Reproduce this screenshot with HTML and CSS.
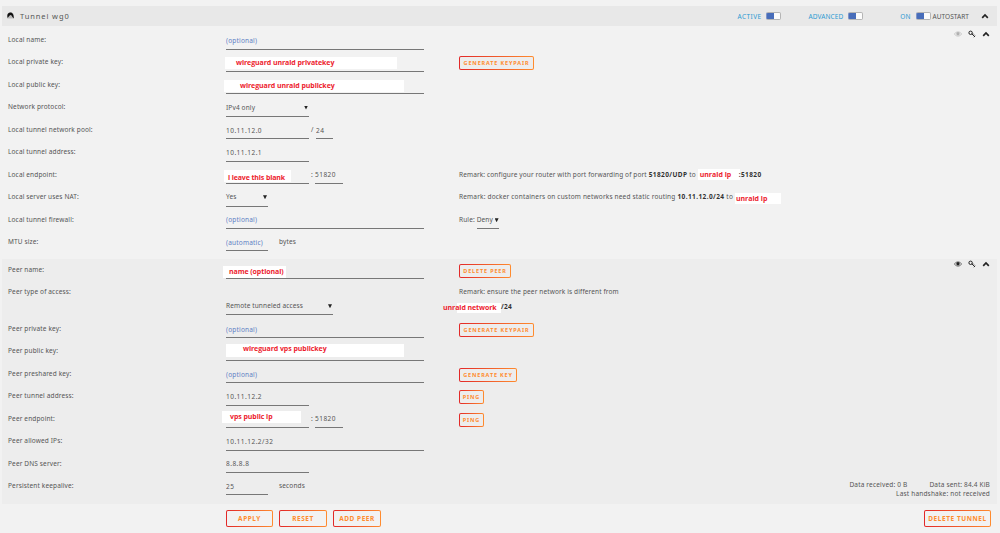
FILE: index.html
```html
<!DOCTYPE html>

<html lang="en">

<head>

    <title>Tunnel wg0</title>

    <meta charset="UTF-8">
    <meta name="viewport" content="width=device-width, initial-scale=1.0">

    <link rel="stylesheet" href="styles.css">

</head>

<body>

    <!-- ICONS -->
    <svg class="sprite">
        <symbol id="chevron" viewBox="0 0 8 6">
            <path d="M1.2 4.8 L4 2 L6.8 4.8" fill="none" stroke="currentColor" stroke-width="1.7"/>
        </symbol>
        <symbol id="eye" viewBox="0 0 8 6">
            <path d="M0.3 3 Q4 -1.4 7.7 3 Q4 7.4 0.3 3 Z" fill="none" stroke="currentColor" stroke-width="0.6"/>
            <circle cx="4" cy="2.8" r="1.7" fill="currentColor"/>
        </symbol>
        <symbol id="key" viewBox="0 0 8 8">
            <circle cx="2.6" cy="2.8" r="1.7" fill="none" stroke="currentColor" stroke-width="1"/>
            <path d="M3.8 3.9 L7 6.8 M5.1 3.6 L5.9 4.4 M5.8 7.2 L7.2 5.8" fill="none" stroke="currentColor" stroke-width="1"/>
        </symbol>
    </svg>

    <!-- TUNNEL HEADER -->
    <div class="title">
        <svg class="tunnel-icon" viewBox="0 0 7 7">
            <path d="M0.3 6.5 L0.3 2 Q3.5 -1.3 6.7 2 L6.7 6.5 Z" fill="#bbb"/>
            <path d="M0.3 4 Q0.4 0.5 3.5 0.5 Q6.6 0.5 6.9 6.4 L5.4 5 L4.6 3.6 L3.2 3 L2 4.2 L0.6 6 Z" fill="#111"/>
        </svg>
        <span class="title-text">Tunnel wg0</span>
        <span class="switch-label active">ACTIVE</span>
        <span class="switch"></span>
        <span class="switch-label advanced">ADVANCED</span>
        <span class="switch"></span>
        <span class="switch-label on">ON</span>
        <span class="switch"></span>
        <span class="autostart">AUTOSTART</span>
        <svg class="icon"><use href="#chevron"/></svg>
    </div>

    <!-- LOCAL SETTINGS -->
    <div class="section">
        <div class="row">
            <label>Local name:</label>
            <div class="field"><input class="wide" placeholder="(optional)"></div>
            <div></div>
            <div class="tools">
                <svg class="icon faded"><use href="#eye"/></svg>
                <svg class="icon key"><use href="#key"/></svg>
                <svg class="icon"><use href="#chevron"/></svg>
            </div>
        </div>
        <div class="row">
            <label>Local private key:</label>
            <div class="field"><input class="wide"><span class="note private-key">wireguard unraid privatekey</span></div>
            <div class="remark"><button class="keypair">GENERATE KEYPAIR</button></div>
        </div>
        <div class="row">
            <label>Local public key:</label>
            <div class="field"><input class="wide"><span class="note public-key">wireguard unraid publickey</span></div>
        </div>
        <div class="row">
            <label>Network protocol:</label>
            <div class="field"><span class="select medium">IPv4 only</span></div>
        </div>
        <div class="row">
            <label>Local tunnel network pool:</label>
            <div class="field"><input class="medium" value="10.11.12.0"><span class="slash">/</span><input class="mask" value="24"></div>
        </div>
        <div class="row">
            <label>Local tunnel address:</label>
            <div class="field"><input class="medium" value="10.11.12.1"></div>
        </div>
        <div class="row">
            <label>Local endpoint:</label>
            <div class="field"><input class="medium"><span class="colon">:</span><input class="port" value="51820"><span class="note endpoint">i leave this blank</span></div>
            <div class="remark">Remark: configure your router with port forwarding of port <b>51820/UDP</b> to <span class="cover router-ip">unraid ip</span><b>:51820</b></div>
        </div>
        <div class="row">
            <label>Local server uses NAT:</label>
            <div class="field"><span class="select small">Yes</span></div>
            <div class="remark docker">Remark: docker containers on custom networks need static routing <b>10.11.12.0/24</b> to <span class="cover docker-ip">unraid ip</span></div>
        </div>
        <div class="row">
            <label>Local tunnel firewall:</label>
            <div class="field"><input class="wide" placeholder="(optional)"></div>
            <div class="remark">Rule: <span class="select rule">Deny</span></div>
        </div>
        <div class="row">
            <label>MTU size:</label>
            <div class="field"><input class="small" placeholder="(automatic)"><span class="unit">bytes</span></div>
        </div>
    </div>

    <!-- PEER SETTINGS -->
    <div class="section peer">
        <div class="row">
            <label>Peer name:</label>
            <div class="field"><input class="wide"><span class="note peer-name">name (optional)</span></div>
            <div class="remark"><button class="delete-peer">DELETE PEER</button></div>
            <div class="tools">
                <svg class="icon"><use href="#eye"/></svg>
                <svg class="icon key"><use href="#key"/></svg>
                <svg class="icon"><use href="#chevron"/></svg>
            </div>
        </div>
        <div class="row">
            <label>Peer type of access:</label>
            <div></div>
            <div class="remark">Remark: ensure the peer network is different from</div>
        </div>
        <div class="row access">
            <div></div>
            <div class="field"><span class="select access-type">Remote tunneled access</span></div>
            <div class="network"><span class="cover">unraid network</span><b>/24</b></div>
        </div>
        <div class="row">
            <label>Peer private key:</label>
            <div class="field"><input class="wide" placeholder="(optional)"></div>
            <div class="remark"><button class="keypair">GENERATE KEYPAIR</button></div>
        </div>
        <div class="row">
            <label>Peer public key:</label>
            <div class="field"><input class="wide"><span class="note peer-key">wireguard vps publickey</span></div>
        </div>
        <div class="row">
            <label>Peer preshared key:</label>
            <div class="field"><input class="wide" placeholder="(optional)"></div>
            <div class="remark"><button class="gen-key">GENERATE KEY</button></div>
        </div>
        <div class="row">
            <label>Peer tunnel address:</label>
            <div class="field"><input class="medium" value="10.11.12.2"></div>
            <div class="remark"><button class="ping">PING</button></div>
        </div>
        <div class="row">
            <label>Peer endpoint:</label>
            <div class="field"><input class="medium"><span class="colon">:</span><input class="port" value="51820"><span class="note vps-ip">vps public ip</span></div>
            <div class="remark"><button class="ping">PING</button></div>
        </div>
        <div class="row">
            <label>Peer allowed IPs:</label>
            <div class="field"><input class="wide" value="10.11.12.2/32"></div>
        </div>
        <div class="row">
            <label>Peer DNS server:</label>
            <div class="field"><input class="medium" value="8.8.8.8"></div>
        </div>
        <div class="row">
            <label>Persistent keepalive:</label>
            <div class="field"><input class="small" value="25"><span class="unit">seconds</span></div>
            <div class="stats">
                <div><span>Data received: 0 B</span><span class="sent">Data sent: 84.4 KiB</span></div>
                <div>Last handshake: not received</div>
            </div>
        </div>
    </div>

    <!-- BUTTONS -->
    <div class="footer">
        <button class="apply">APPLY</button>
        <button class="reset">RESET</button>
        <button class="add-peer">ADD PEER</button>
        <button class="delete-tunnel">DELETE TUNNEL</button>
    </div>

</body>

</html>
```
FILE: styles.css
```css
* {
    box-sizing: border-box;
    padding: 0;
    margin: 0;
}
body {
    background-color: #f2f2f2;
    color: #555;
    font-family: "Noto Sans", sans-serif;
    font-size: 6.5px;
    letter-spacing: 0.14px;
    padding: 6px 3px 0 2px;
    height: 533px;
    overflow: hidden;
}
b {
    color: #333;
    letter-spacing: 0.42px;
}
.sprite {
    display: none;
}
.icon {
    width: 8px;
    height: 6px;
    color: #222;
    flex: none;
}
.icon.key {
    width: 8px;
    height: 8px;
}
.icon.faded {
    color: #b0b0b0;
}

/* header bar */
.title {
    display: flex;
    align-items: center;
    height: 20px;
    padding: 0 8px 0 5px;
    background-color: #e8e8e8;
}
.tunnel-icon {
    width: 7px;
    height: 7px;
    margin-bottom: 2px;
}
.title-text {
    font-size: 7.5px;
    letter-spacing: 0.9px;
    margin: 0 auto 0 6px;
}
.switch-label {
    color: #2d9bd3;
    margin-right: 5px;
    letter-spacing: 0.1px;
}
.switch-label.active {
    letter-spacing: 0.4px;
}
.switch {
    width: 15px;
    height: 8px;
    border: 1px solid #b5b5b5;
    border-left-color: #7d94c8;
    border-radius: 2px;
    background: linear-gradient(to right, #486dba 52%, #fcfcfc 52%);
}
.advanced {
    margin-left: 27px;
}
.on {
    margin-left: 37px;
}
.autostart {
    margin: 0 12px 0 2px;
    letter-spacing: 0.05px;
}

/* form rows */
.section {
    padding-top: 3px;
    height: 232.5px;
}
.peer {
    padding-top: 0;
    height: 245px;
    background-color: #ededed;
}
.row {
    display: grid;
    grid-template-columns: 218px 233px 1fr auto;
    height: 22.45px;
    padding: 0 7px 0 6px;
    line-height: 22.9px;
    white-space: nowrap;
}
.field {
    display: flex;
    position: relative;
    height: 21px;
}
input, .select {
    display: block;
    height: 20.5px;
    border: none;
    border-bottom: 1px solid #777;
    border-radius: 0;
    background: none;
    color: #555;
    font: inherit;
    letter-spacing: 0.48px;
    padding-top: 3px;
    line-height: 18px;
    outline: none;
}
::placeholder {
    color: #5f80c4;
    letter-spacing: 0.2px;
    opacity: 1;
}
.wide {
    width: 198px;
}
.medium {
    width: 83px;
}
.small {
    width: 42px;
}
.mask {
    width: 17px;
}
.port {
    width: 28px;
}
.slash, .colon {
    padding-left: 2px;
    width: 7px;
}
.colon {
    width: 6px;
}
.unit {
    padding-left: 11px;
}
.select {
    display: flex;
    justify-content: space-between;
    align-items: center;
    letter-spacing: 0.15px;
    padding-right: 1px;
}
.select::after {
    content: "";
    width: 4px;
    height: 4px;
    background-color: #222;
    clip-path: polygon(0 0, 100% 0, 50% 100%);
}
.access {
    height: 14.55px;
}
.access .field {
    margin-top: -8.5px;
}
.access-type {
    width: 107px;
    letter-spacing: 0.12px;
}
.remark {
    letter-spacing: 0.13px;
}
.docker {
    letter-spacing: 0.18px;
}
.rule {
    display: inline-flex;
    width: 22px;
    height: 18px;
    line-height: 16px;
    padding: 2px 0 0;
    vertical-align: middle;
}

/* red notes on white boxes, laid over the inputs */
.note, .cover {
    background-color: #fff;
    color: #ed1c2e;
    font-family: "Open Sans", sans-serif;
    font-weight: bold;
    font-size: 7px;
    letter-spacing: -0.07px;
}
.note {
    position: absolute;
    height: 12px;
    line-height: 12px;
}
.private-key {
    left: -1px;
    top: 6px;
    width: 172px;
    padding-left: 11px;
}
.public-key {
    left: -2px;
    top: 6px;
    width: 180px;
    padding-left: 16px;
}
.endpoint {
    left: -2px;
    top: 6px;
    width: 67px;
    padding-left: 4px;
    line-height: 15px;
    letter-spacing: -0.12px;
}
.peer-name {
    left: -3px;
    top: 7px;
    width: 63px;
    padding-left: 6px;
}
.peer-key {
    left: 0;
    top: 4px;
    width: 178px;
    height: 13px;
    line-height: 10px;
    padding-left: 17px;
}
.vps-ip {
    left: -4px;
    top: 3px;
    width: 79px;
    padding-left: 8px;
}
.cover {
    display: inline-block;
    height: 11px;
    line-height: 11px;
    vertical-align: middle;
}
.router-ip {
    width: 42px;
    padding-left: 2px;
    letter-spacing: 0;
}
.router-ip + b {
    margin-left: -1px;
}
.docker-ip {
    width: 46px;
    padding-left: 1px;
    letter-spacing: 0;
    margin-top: 2px;
}
.network {
    margin: -7px 0 0 -16px;
}
.network b {
    letter-spacing: 0.3px;
}
.network .cover {
    width: 58px;
    height: 10px;
    line-height: 10px;
    background: linear-gradient(to right, transparent 14px, #fff 14px);
}
.tools {
    display: flex;
    align-items: center;
    gap: 6px;
    height: 10px;
    padding-right: 0.5px;
}

/* buttons */
button {
    display: block;
    height: 14px;
    border: 1px solid transparent;
    border-radius: 2px;
    background: linear-gradient(#ededed, #ededed) padding-box, linear-gradient(to right, #e22828, #ff8c2f) border-box;
    color: #ff8c2f;
    font-family: "Noto Sans", sans-serif;
    font-weight: bold;
    font-size: 5.5px;
    letter-spacing: 0.85px;
    line-height: 12px;
    text-align: center;
}
.remark button {
    margin-top: 5px;
}
.keypair {
    width: 75px;
}
.delete-peer {
    width: 52px;
}
.gen-key {
    width: 58px;
}
.ping {
    width: 25px;
}
.stats {
    grid-column: 3 / 5;
    line-height: 9.5px;
    padding-top: 5px;
    text-align: right;
    letter-spacing: 0.18px;
}
.sent {
    margin-left: 22px;
}
.footer {
    display: flex;
    gap: 6px;
    padding: 6px 6px 0 224px;
}
.footer button {
    height: 17px;
    font-size: 6.5px;
    letter-spacing: 0.55px;
    line-height: 15px;
    background: linear-gradient(#f2f2f2, #f2f2f2) padding-box, linear-gradient(to right, #e22828, #ff8c2f) border-box;
}
.apply {
    width: 47px;
}
.reset, .add-peer {
    width: 48px;
}
.delete-tunnel {
    width: 67px;
    margin-left: auto;
}
```
